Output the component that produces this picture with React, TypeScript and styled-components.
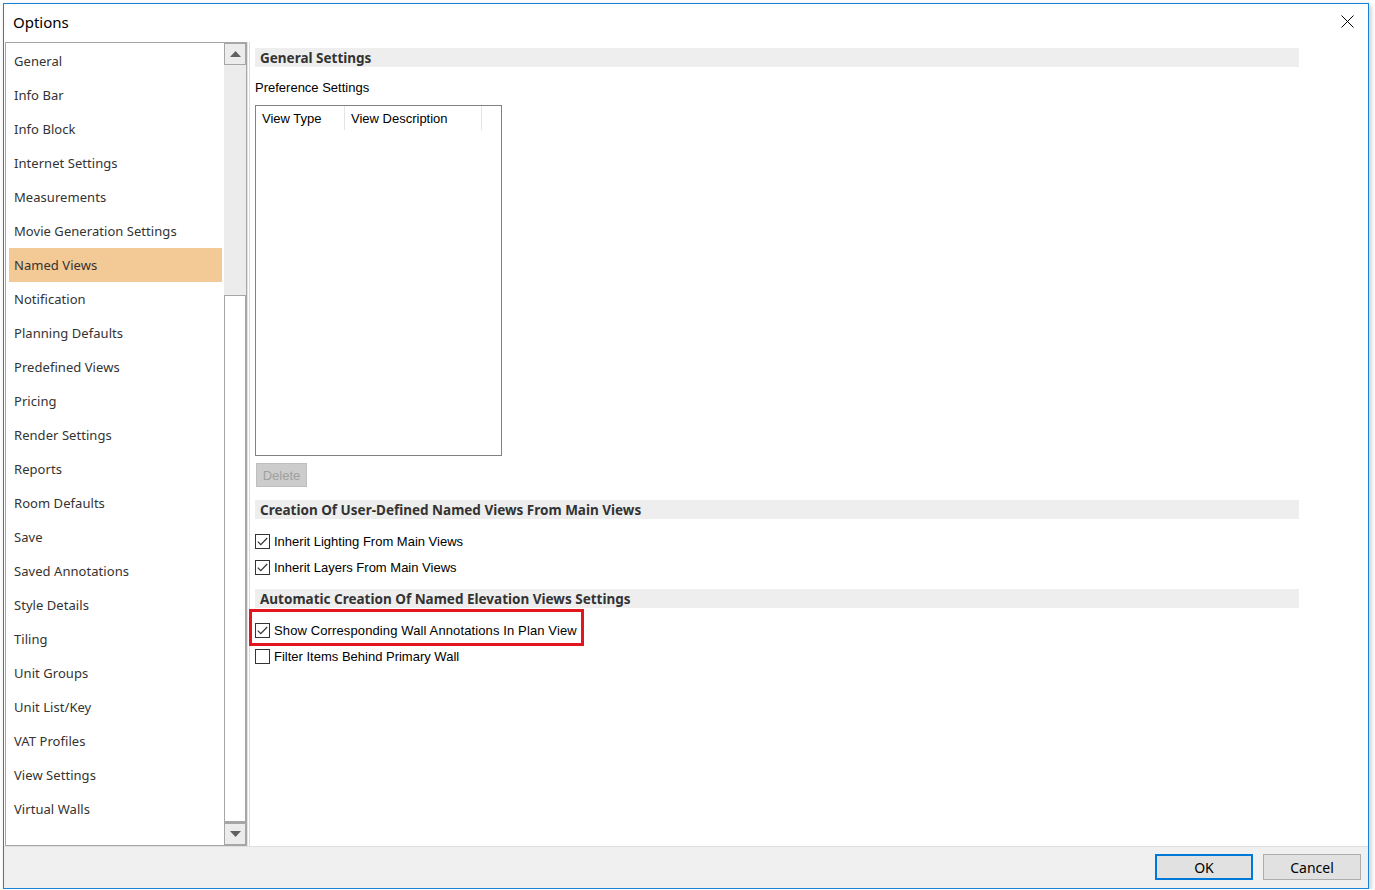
import React from "react";
import styled, { createGlobalStyle } from "styled-components";

const GlobalStyle = createGlobalStyle`
  html, body {
    margin: 0;
    padding: 0;
    background: #ffffff;
  }
  *, *::before, *::after {
    box-sizing: border-box;
  }
`;

const uiFont = `"Noto Sans", "Open Sans", sans-serif`;
const formFont = `"Liberation Sans", Arial, sans-serif`;

const categories = [
  "General",
  "Info Bar",
  "Info Block",
  "Internet Settings",
  "Measurements",
  "Movie Generation Settings",
  "Named Views",
  "Notification",
  "Planning Defaults",
  "Predefined Views",
  "Pricing",
  "Render Settings",
  "Reports",
  "Room Defaults",
  "Save",
  "Saved Annotations",
  "Style Details",
  "Tiling",
  "Unit Groups",
  "Unit List/Key",
  "VAT Profiles",
  "View Settings",
  "Virtual Walls",
];

const Window = styled.div`
  margin: 3px 0 0 3px;
  width: 1366px;
  height: 886px;
  border: 1px solid #1883d7;
  background: #ffffff;
  box-shadow: 2px 2px 5px rgba(0, 0, 0, 0.22);
  display: flex;
  flex-direction: column;
`;

const TitleBar = styled.div`
  height: 38px;
  flex: none;
  display: flex;
  align-items: center;
  justify-content: space-between;
  padding: 0 14px 3px 9px;
  font-family: ${uiFont};
  font-size: 15px;
  color: #000000;
`;

const CloseButton = styled.button`
  width: 14px;
  height: 14px;
  padding: 0;
  border: none;
  background: none;
  display: flex;
  align-items: center;
  justify-content: center;
`;

const Body = styled.div`
  height: 804px;
  flex: none;
  display: flex;
  padding-left: 1px;
`;

const Sidebar = styled.div`
  width: 242px;
  height: 804px;
  border: 1px solid #a6a6a6;
  display: flex;
`;

const CategoryList = styled.ul`
  list-style: none;
  margin: 0;
  padding: 1px 2px 0 3px;
  width: 218px;
  overflow: hidden;
`;

const CategoryItem = styled.li<{ $active?: boolean }>`
  height: 34px;
  display: flex;
  align-items: center;
  padding-left: 5px;
  font-family: ${uiFont};
  font-size: 13px;
  letter-spacing: 0.05px;
  color: #333333;
  background: ${(p) => (p.$active ? "#f3c995" : "transparent")};
`;

const Scrollbar = styled.div`
  width: 22px;
  background: #ececec;
  display: flex;
  flex-direction: column;
`;

const ArrowButton = styled.div`
  height: 22px;
  flex: none;
  border: 1px solid #a6a6a6;
  background: #ececec;
  display: flex;
  align-items: center;
  justify-content: center;
`;

const Track = styled.div<{ $size: number }>`
  height: ${(p) => p.$size}px;
  flex: none;
`;

const Thumb = styled.div`
  flex: 1;
  border: 1px solid #a6a6a6;
  border-bottom-width: 2px;
  background: #ffffff;
`;

const Splitter = styled.div`
  width: 3px;
  flex: none;
  border-left: 1px solid #e3e3e3;
  border-right: 1px solid #dcdcdc;
`;

const Content = styled.div`
  flex: 1;
  padding: 6px 0 0 5px;
  display: flex;
  flex-direction: column;
  align-items: flex-start;
`;

const SectionHeader = styled.div<{ $gap: number }>`
  width: 1044px;
  height: 19px;
  margin-top: ${(p) => p.$gap}px;
  padding-left: 5px;
  background: #eeeeee;
  display: flex;
  align-items: center;
  font-family: ${uiFont};
  font-weight: 700;
  font-size: 13.5px;
  color: #333333;
`;

const Label = styled.div`
  margin-top: 13px;
  height: 16px;
  line-height: 16px;
  font-family: ${formFont};
  font-size: 13px;
  color: #000000;
`;

const ListView = styled.div`
  margin-top: 9px;
  width: 247px;
  height: 351px;
  border: 1px solid #828282;
  background: #ffffff;
`;

const ListHeader = styled.div`
  display: flex;
  height: 24px;
`;

const ColumnHead = styled.div<{ $width: number }>`
  width: ${(p) => p.$width}px;
  padding-left: 6px;
  border-right: 1px solid #e5e5e5;
  display: flex;
  align-items: center;
  font-family: ${formFont};
  font-size: 13px;
  color: #000000;
`;

const DisabledButton = styled.button`
  margin: 7px 0 0 1px;
  width: 51px;
  height: 24px;
  border: 1px solid #bfbfbf;
  background: #cccccc;
  font-family: ${formFont};
  font-size: 13px;
  color: #a0a0a0;
  padding: 0;
`;

const CheckRow = styled.label<{ $gap?: number; $flagged?: boolean }>`
  position: relative;
  height: 26px;
  margin-top: ${(p) => p.$gap ?? 0}px;
  display: flex;
  align-items: center;
  gap: 4px;
  font-family: ${formFont};
  font-size: 13px;
  color: #000000;

  ${(p) =>
    p.$flagged &&
    `
    letter-spacing: 0.12px;
    &::after {
      content: "";
      position: absolute;
      top: -8px;
      bottom: -3px;
      left: -6px;
      width: 335px;
      border: 3px solid #e3151f;
    }
  `}
`;

const Box = styled.span`
  width: 15px;
  height: 15px;
  border: 1px solid #333333;
  background: #ffffff;
  display: flex;
  align-items: center;
  justify-content: center;
`;

const Footer = styled.div`
  flex: 1;
  border-top: 1px solid #dfdfdf;
  background: #f0f0f0;
  display: flex;
  justify-content: flex-end;
  align-items: flex-start;
  gap: 10px;
  padding: 7px 7px 0 0;
`;

const DialogButton = styled.button<{ $primary?: boolean }>`
  width: 98px;
  height: 26px;
  padding: 0;
  border: ${(p) => (p.$primary ? "2px solid #0078d7" : "1px solid #adadad")};
  background: #e1e1e1;
  font-family: ${uiFont};
  font-size: 14px;
  color: #000000;
`;

const Check = ({ checked }: { checked: boolean }) => (
  <Box>
    {checked && (
      <svg width="11" height="9" viewBox="0 0 11 9">
        <path d="M0.8 4.6 L3.8 7.6 L10.2 1" fill="none" stroke="#333" strokeWidth="1.2" />
      </svg>
    )}
  </Box>
);

const Option = ({
  text,
  checked,
  gap,
  flagged,
}: {
  text: string;
  checked: boolean;
  gap?: number;
  flagged?: boolean;
}) => (
  <CheckRow $gap={gap} $flagged={flagged}>
    <Check checked={checked} />
    {text}
  </CheckRow>
);

export default function App() {
  return (
    <>
      <GlobalStyle />
      <Window>
        <TitleBar>
          Options
          <CloseButton>
            <svg width="13" height="13" viewBox="0 0 13 13">
              <path d="M0.5 0.5 L12.5 12.5 M12.5 0.5 L0.5 12.5" stroke="#000" strokeWidth="1" />
            </svg>
          </CloseButton>
        </TitleBar>
        <Body>
          <Sidebar>
            <CategoryList>
              {categories.map((c) => (
                <CategoryItem key={c} $active={c === "Named Views"}>
                  {c}
                </CategoryItem>
              ))}
            </CategoryList>
            <Scrollbar>
              <ArrowButton>
                <svg width="11" height="6" viewBox="0 0 11 6">
                  <path d="M5.5 0 L11 6 L0 6 Z" fill="#606060" />
                </svg>
              </ArrowButton>
              <Track $size={230} />
              <Thumb />
              <ArrowButton>
                <svg width="11" height="6" viewBox="0 0 11 6">
                  <path d="M0 0 L11 0 L5.5 6 Z" fill="#606060" />
                </svg>
              </ArrowButton>
            </Scrollbar>
          </Sidebar>
          <Splitter />
          <Content>
            <SectionHeader $gap={0}>General Settings</SectionHeader>
            <Label>Preference Settings</Label>
            <ListView>
              <ListHeader>
                <ColumnHead $width={89}>View Type</ColumnHead>
                <ColumnHead $width={137}>View Description</ColumnHead>
              </ListHeader>
            </ListView>
            <DisabledButton disabled>Delete</DisabledButton>
            <SectionHeader $gap={13}>
              Creation Of User-Defined Named Views From Main Views
            </SectionHeader>
            <Option text="Inherit Lighting From Main Views" checked gap={9} />
            <Option text="Inherit Layers From Main Views" checked />
            <SectionHeader $gap={9}>
              Automatic Creation Of Named Elevation Views Settings
            </SectionHeader>
            <Option
              text="Show Corresponding Wall Annotations In Plan View"
              checked
              gap={9}
              flagged
            />
            <Option text="Filter Items Behind Primary Wall" checked={false} />
          </Content>
        </Body>
        <Footer>
          <DialogButton $primary>OK</DialogButton>
          <DialogButton>Cancel</DialogButton>
        </Footer>
      </Window>
    </>
  );
}
